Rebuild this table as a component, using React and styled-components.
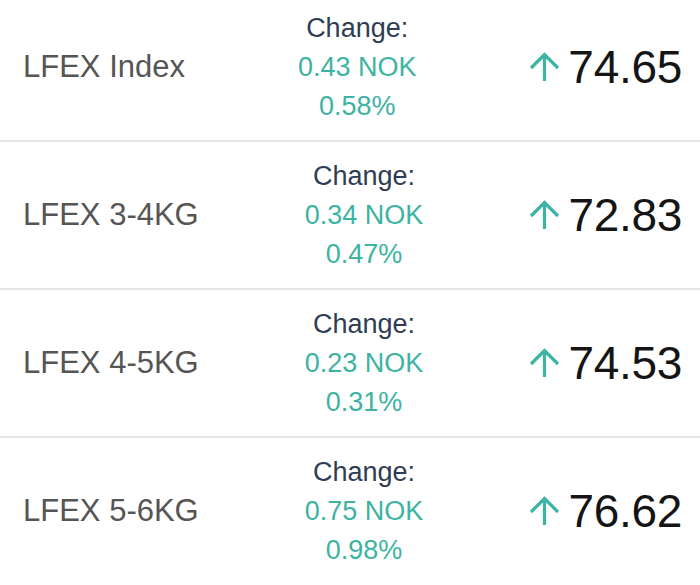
import React from 'react';
import styled, { createGlobalStyle } from 'styled-components';

const GlobalStyle = createGlobalStyle`
  html, body {
    margin: 0;
    padding: 0;
    background: #ffffff;
    font-family: "Liberation Sans", Arial, Helvetica, sans-serif;
    overflow: hidden;
  }
`;

const List = styled.div`
  display: flex;
  flex-direction: column;
  margin-top: -6px;
`;

const Row = styled.div`
  display: flex;
  align-items: center;
  justify-content: space-between;
  height: 146px;
  padding: 0 18px 0 23px;
  border-bottom: 2px solid #e4e4e4;

  &:last-child {
    border-bottom-color: transparent;
  }
`;

const Name = styled.div`
  font-size: 31px;
  color: #555555;
  white-space: nowrap;
`;

const ChangeBox = styled.div`
  display: flex;
  flex-direction: column;
  align-items: center;
  font-size: 27px;
  line-height: 39px;
`;

const ChangeLabel = styled.div`
  color: #2f3d52;
`;

const ChangeValue = styled.div`
  color: ${(p) => (p.up ? '#3db3a2' : '#e25c5c')};
`;

const Price = styled.div`
  display: flex;
  align-items: center;
  gap: 8px;
`;

const PriceValue = styled.div`
  font-size: 46px;
  color: #151515;
  letter-spacing: -0.3px;
`;

const UpArrow = () => (
  <svg width="31" height="30" viewBox="0 0 31 30" fill="none">
    <path
      d="M15.5 29V3M2 16L15.5 2.5L29 16"
      stroke="#3db3a2"
      strokeWidth="3.2"
    />
  </svg>
);

const items = [
  { name: 'LFEX Index', nok: '0.43', pct: '0.58', price: '74.65' },
  { name: 'LFEX 3-4KG', nok: '0.34', pct: '0.47', price: '72.83' },
  { name: 'LFEX 4-5KG', nok: '0.23', pct: '0.31', price: '74.53' },
  { name: 'LFEX 5-6KG', nok: '0.75', pct: '0.98', price: '76.62' },
];

const App = () => (
  <>
    <GlobalStyle />
    <List>
      {items.map((item) => (
        <Row key={item.name}>
          <Name>{item.name}</Name>
          <ChangeBox>
            <ChangeLabel>Change:</ChangeLabel>
            <ChangeValue up>{`${item.nok} NOK`}</ChangeValue>
            <ChangeValue up>{`${item.pct}%`}</ChangeValue>
          </ChangeBox>
          <Price>
            <UpArrow />
            <PriceValue>{item.price}</PriceValue>
          </Price>
        </Row>
      ))}
    </List>
  </>
);

export default App;
